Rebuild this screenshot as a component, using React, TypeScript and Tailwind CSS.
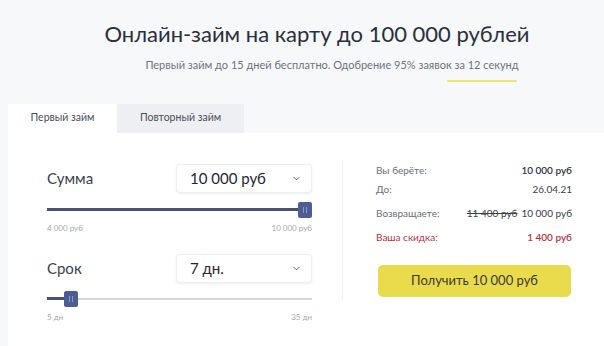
import { ChevronDown } from 'lucide-react'

function Select({ value }: { value: string }) {
    return (
        <div className="w-[136px] h-[29px] bg-white rounded-[4px] border border-[#eceef2] shadow-[0_1px_3px_rgba(40,50,80,0.08)] flex items-center justify-between pl-[13px] pr-[9px]">
            <span className="text-[15px] text-[#23262e]">{value}</span>
            <ChevronDown className="w-[11px] h-[11px] text-[#55596a]" strokeWidth={2} />
        </div>
    )
}

function Slider({ pct, min, max }: { pct: number; min: string; max: string }) {
    return (
        <div className="w-[265px]">
            <div className="relative h-[16px] flex items-center">
                <div className="w-full h-[2px] bg-[#d3d6dc]" />
                <div className="absolute left-0 h-[3px] bg-[#4a5270]" style={{ width: `${pct}%` }} />
                <div
                    className="absolute w-[14px] h-[16px] rounded-[2px] bg-[#4b5d92] flex items-center justify-center gap-[2px]"
                    style={{ left: `calc(${pct}% - ${pct > 50 ? 14 : 7}px)` }}
                >
                    <span className="w-px h-[6px] bg-[#8d9bc4]" />
                    <span className="w-px h-[6px] bg-[#8d9bc4]" />
                </div>
            </div>
            <div className="flex justify-between mt-[4px] text-[8px] text-[#a4a8b2]">
                <span>{min}</span>
                <span>{max}</span>
            </div>
        </div>
    )
}

export default function App() {
    return (
        <div className="w-[604px] h-[346px] bg-[#f7f8fa] overflow-hidden font-['Lato','Noto_Sans',sans-serif]">
            <div className="pt-[19px] text-center">
                <h1 className="text-[22px] leading-[30px] text-[#2a2f3b] ml-[30px]">Онлайн-займ на карту до 100 000 рублей</h1>
                <p className="mt-[8px] text-[11px] text-[#6e7280] ml-[60px]">
                    Первый займ до 15 дней бесплатно. Одобрение 95% заявок за 12 секунд
                </p>
                <div className="ml-[447px] mt-[6px] w-[70px] h-[2px] rounded-full bg-[#f0e27a]" />
            </div>

            <div className="ml-[8px] mt-[22px]">
                <div className="flex text-[10.5px] text-[#4a4e5a]">
                    <div className="w-[109px] h-[29px] bg-white flex items-center justify-center">Первый займ</div>
                    <div className="w-[127px] h-[29px] bg-[#edeff3] flex items-center justify-center">Повторный займ</div>
                </div>
                <div className="bg-white h-[220px] flex">
                    <div className="w-[334px] pl-[39px] pt-[31px]">
                        <div className="flex items-center justify-between w-[265px]">
                            <span className="text-[15px] text-[#3b3f4a]">Сумма</span>
                            <Select value="10 000 руб" />
                        </div>
                        <div className="mt-[9px]">
                            <Slider pct={100} min="4 000 руб" max="10 000 руб" />
                        </div>
                        <div className="flex items-center justify-between w-[265px] mt-[20px]">
                            <span className="text-[15px] text-[#3b3f4a]">Срок</span>
                            <Select value="7 дн." />
                        </div>
                        <div className="mt-[8px]">
                            <Slider pct={9} min="5 дн" max="35 дн" />
                        </div>
                    </div>
                    <div className="mt-[27px] h-[140px] w-px bg-[#f0f1f4]" />
                    <div className="pl-[33px] pt-[28px] w-[229px] text-[10px] text-[#6a6e7a]">
                        <div className="flex justify-between h-[20px] items-center">
                            <span>Вы берёте:</span>
                            <span className="font-semibold text-[#2e323c]">10 000 руб</span>
                        </div>
                        <div className="flex justify-between h-[20px] items-center mt-[-1px]">
                            <span>До:</span>
                            <span className="text-[#3a3e48]">26.04.21</span>
                        </div>
                        <div className="flex justify-between h-[20px] items-center mt-[4px]">
                            <span>Возвращаете:</span>
                            <span className="text-[#3a3e48]">
                                <span className="line-through mr-[4px]">11 400 руб</span>10 000 руб
                            </span>
                        </div>
                        <div className="flex justify-between h-[20px] items-center mt-[4px] text-[#b8323a]">
                            <span>Ваша скидка:</span>
                            <span className="font-semibold">1 400 руб</span>
                        </div>
                        <button className="mt-[17px] ml-[2px] w-[193px] h-[32px] rounded-[5px] bg-[#e9db4c] text-[13px] text-[#3a3a36]">
                            Получить 10 000 руб
                        </button>
                    </div>
                </div>
            </div>
        </div>
    )
}
